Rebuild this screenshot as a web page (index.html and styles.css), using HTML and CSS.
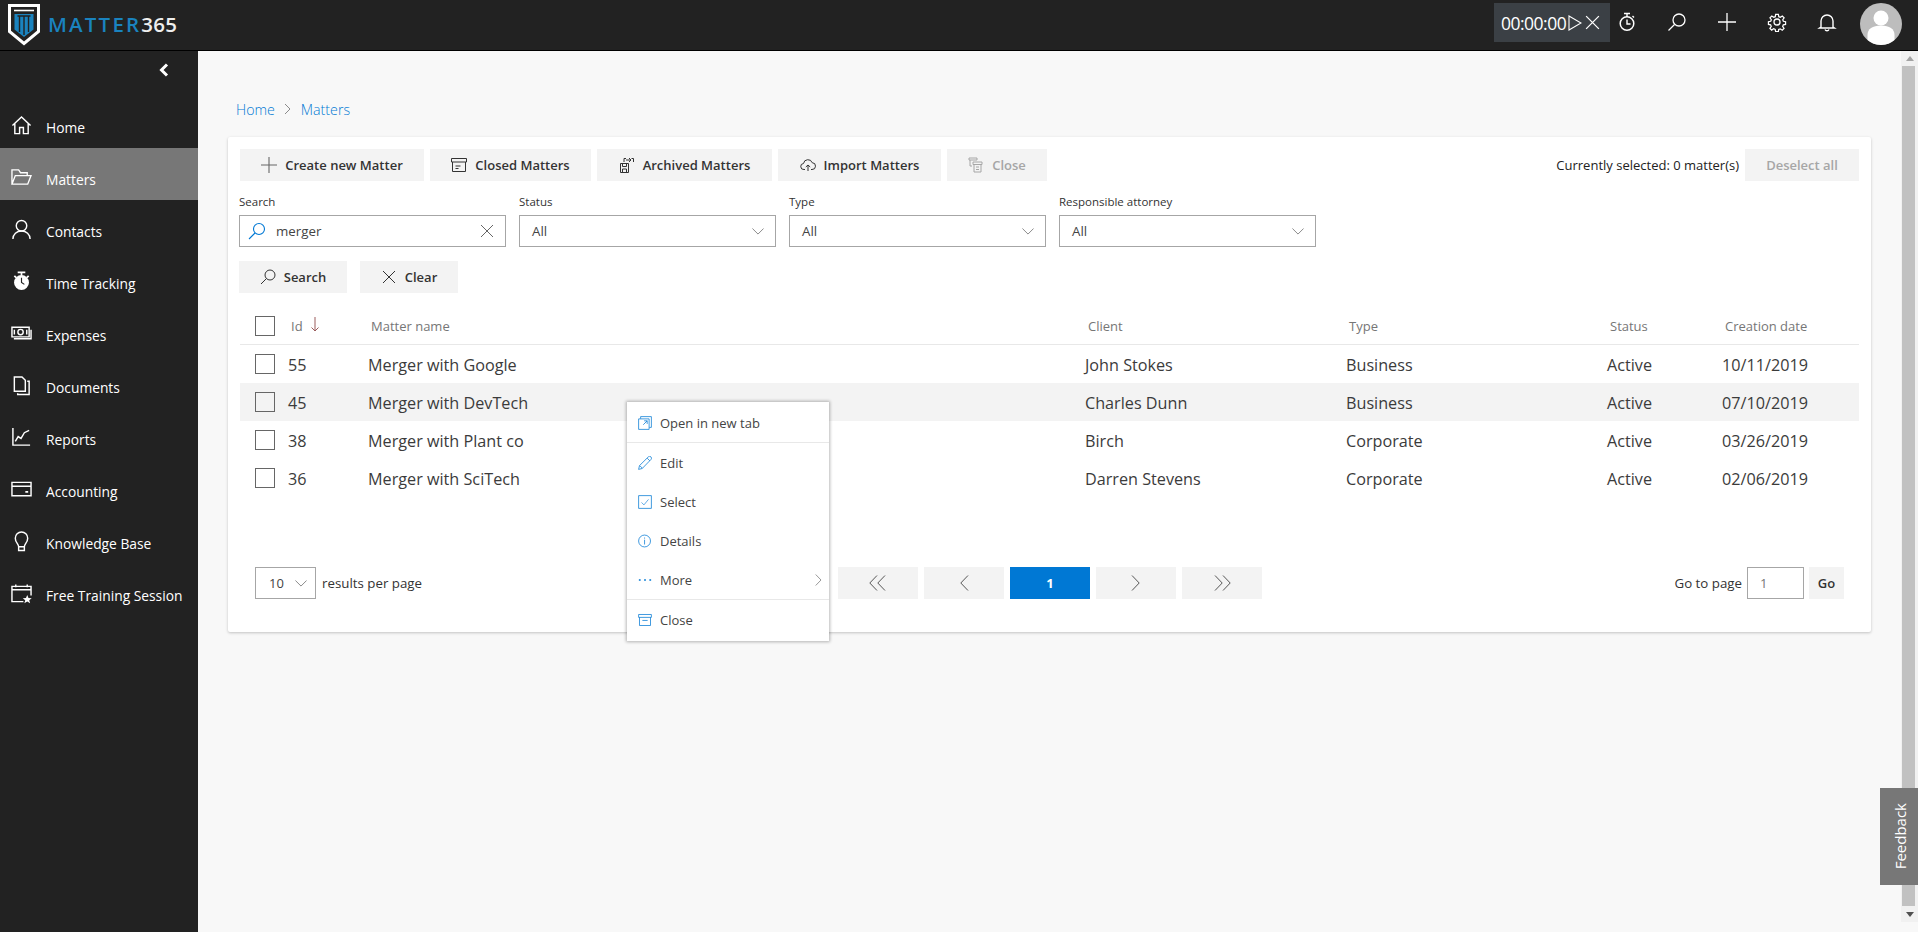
FILE: index.html
```html
<!DOCTYPE html>
<html lang="en">
<head>
<meta charset="utf-8">
<title>Matters - Matter365</title>
<link rel="stylesheet" href="styles.css">
</head>
<body>
<header class="topbar">
  <div class="logo">
    <svg class="logo-mark" width="32" height="42" viewBox="0 0 32 42"><path d="M1.500 1.500h29v26L16 39.500 1.500 27.500z" fill="#222" stroke="#fff" stroke-width="3"/><path d="M6 6.500h20" stroke="#fff" stroke-width="1.600"/><path d="M6.500 10h19v15.500L16 33l-9.500-7.500z" fill="#1a83bf"/><path d="M9.500 12h13M11.500 12v16M16 12v19M20.500 12v16" stroke="#222" stroke-width="1.400" fill="none"/></svg>
    <span class="logo-text"><span class="logo-blue">MATTER</span>365</span>
  </div>
  <div class="top-actions">
    <div class="timer">
      <span class="timer-time">00:00:00</span>
      <svg width="14" height="18" viewBox="0 0 14 18"><path d="M1 2l12 7-12 7z" fill="none" stroke="#fff" stroke-width="1.100"/></svg>
      <svg width="17" height="17" viewBox="0 0 16 16"><path d="M2 2l12 12M14 2L2 14" stroke="#fff" stroke-width="1.200"/></svg>
    </div>
    <svg class="top-icon" width="20" height="20" viewBox="0 0 20 20"><circle cx="10" cy="11.500" r="6.800" fill="none" stroke="#fff" stroke-width="1.500"/><path d="M10 7.500v4.500h3.500M7 1.500h6M10 2v3M15.500 4l1.500 1.500" fill="none" stroke="#fff" stroke-width="1.400"/></svg>
    <svg class="top-icon" width="20" height="20" viewBox="0 0 20 20"><circle cx="12" cy="8" r="6" fill="none" stroke="#fff" stroke-width="1.300"/><path d="M7.500 12.500L1.500 18.500" stroke="#fff" stroke-width="1.300"/></svg>
    <svg class="top-icon" width="20" height="20" viewBox="0 0 20 20"><path d="M10 1v18M1 10h18" stroke="#fff" stroke-width="1.300"/></svg>
    <svg class="top-icon" width="20" height="20" viewBox="0 0 20 20"><circle cx="10" cy="10" r="3" fill="none" stroke="#fff" stroke-width="1.300"/><path d="M8.500 1.500h3l.5 2.600 1.700.7 2.200-1.500 2 2-1.500 2.200.7 1.700 2.400.5v3l-2.500.5-.7 1.700 1.500 2.200-2 2-2.200-1.500-1.700.7-.4 2.400h-3l-.5-2.500-1.700-.7-2.200 1.500-2-2 1.500-2.200-.7-1.700-2.400-.4v-3l2.500-.5.700-1.700-1.500-2.200 2-2 2.200 1.500 1.700-.7z" transform="translate(1 1) scale(.9)" fill="none" stroke="#fff" stroke-width="1.400"/></svg>
    <svg class="top-icon" width="20" height="20" viewBox="0 0 20 20"><path d="M4 15V9a6 6 0 0 1 12 0v6l1.500 1h-15zM8 17.500a2.200 2.200 0 0 0 4 0" fill="none" stroke="#fff" stroke-width="1.400"/></svg>
    <div class="avatar">
      <svg width="42" height="42" viewBox="0 0 42 42"><circle cx="21" cy="21" r="21" fill="#bdbdbd"/><circle cx="21" cy="15" r="7.500" fill="#fff"/><path d="M7.500 37v-5c0-6 5-9.500 13.500-9.500S34.500 26 34.500 32v5a21 21 0 0 1-27 0z" fill="#fff"/></svg>
    </div>
  </div>
</header>

<div class="shell">
  <nav class="sidebar">
    <div class="collapse">
      <svg width="12" height="14" viewBox="0 0 12 14"><path d="M9 1.500L3.500 7 9 12.500" fill="none" stroke="#fff" stroke-width="3"/></svg>
    </div>
    <a class="nav-item"><svg class="nav-icon" viewBox="0 0 22 22"><path d="M1.500 11L11 2l9.500 9M4 9v10.500h5V13h4v6.500h5V9" fill="none" stroke="#fff" stroke-width="1.500"/></svg>Home</a>
    <a class="nav-item active"><svg class="nav-icon" viewBox="0 0 22 22"><path d="M1 18V3h7l2 3h7v3M1 18l3.500-9H21l-3.500 9z" fill="none" stroke="#fff" stroke-width="1.400"/></svg>Matters</a>
    <a class="nav-item"><svg class="nav-icon" viewBox="0 0 22 22"><circle cx="11" cy="7" r="5.500" fill="none" stroke="#fff" stroke-width="1.500"/><path d="M2 21c0-5 4-8.500 9-8.500s9 3.500 9 8.500" fill="none" stroke="#fff" stroke-width="1.500"/></svg>Contacts</a>
    <a class="nav-item"><svg class="nav-icon" viewBox="0 0 22 22"><circle cx="11" cy="12" r="7.800" fill="#fff"/><path d="M7 1.500h8M11 1.500v3M3.500 5l2 2M18.500 5l-2 2" stroke="#fff" stroke-width="1.800"/><path d="M11 7v5l3 2" fill="none" stroke="#222" stroke-width="1.200"/></svg>Time Tracking</a>
    <a class="nav-item"><svg class="nav-icon" viewBox="0 0 22 22"><path d="M1 4.500h18v10H1zM21 7v9.500H3" fill="none" stroke="#fff" stroke-width="1.500"/><circle cx="10" cy="9.500" r="2.800" fill="none" stroke="#fff" stroke-width="1.500"/><path d="M3.500 7v5M16.500 7v5" stroke="#fff" stroke-width="1.500"/></svg>Expenses</a>
    <a class="nav-item"><svg class="nav-icon" viewBox="0 0 22 22"><path d="M3.500 2h8l3.500 3.500V17h-11.500zM17 6.500h2v14H7V19" fill="none" stroke="#fff" stroke-width="1.500"/></svg>Documents</a>
    <a class="nav-item"><svg class="nav-icon" viewBox="0 0 22 22"><path d="M2 1v18h18" fill="none" stroke="#fff" stroke-width="1.500"/><path d="M4.500 15l3-5 3 2 3.500-6 5-2.500" fill="none" stroke="#fff" stroke-width="1.500"/></svg>Reports</a>
    <a class="nav-item"><svg class="nav-icon" viewBox="0 0 22 22"><path d="M1 3.500h20v14H1zM1 7.500h20" fill="none" stroke="#fff" stroke-width="1.500"/><path d="M15 13.500h3" stroke="#fff" stroke-width="1.800"/></svg>Accounting</a>
    <a class="nav-item"><svg class="nav-icon" viewBox="0 0 22 22"><path d="M8 16.500c0-3-3.500-4.500-3.500-9a6.500 6.500 0 0 1 13 0c0 4.500-3.500 6-3.500 9zM8 17v3.500h6V17" fill="none" stroke="#fff" stroke-width="1.500"/></svg>Knowledge Base</a>
    <a class="nav-item"><svg class="nav-icon" viewBox="0 0 22 22"><path d="M13 19.500H1v-16h20V13M1 7h20M5 1.500v3M17 1.500v3" fill="none" stroke="#fff" stroke-width="1.500"/><path d="M17 12.500l1.300 3.200 3.400.2-2.600 2.100.9 3.300-3-1.800-3 1.800.9-3.300-2.600-2.100 3.400-.2z" fill="#fff"/></svg>Free Training Session</a>
  </nav>

  <main class="main">
    <div class="crumbs">
      <a class="crumb">Home</a>
      <svg class="crumb-sep" width="8" height="12" viewBox="0 0 8 12"><path d="M1 1l5 5-5 5" fill="none" stroke="#8a8a8a"/></svg>
      <a class="crumb">Matters</a>
    </div>

    <section class="card">
      <div class="toolbar">
        <div class="tool-group">
          <button class="btn">
            <svg class="btn-icon" viewBox="0 0 16 16"><path d="M8 0v16M0 8h16" stroke="#666" stroke-width="1.100"/></svg>Create new Matter
          </button>
          <button class="btn">
            <svg class="btn-icon" viewBox="0 0 16 16"><path d="M.5 1.500h15v3.500H.5zM1.500 5v9.500h13V5M4.500 9h5M4.500 11.500h3" fill="none" stroke="#333" stroke-width="1"/></svg>Closed Matters
          </button>
          <button class="btn">
            <svg class="btn-icon" viewBox="0 0 16 16"><path d="M5 5V1.500h2M12.500 1.500h2V5M7 3h5M10 1l2 2-2 2M1.500 6.500h8v9h-8zM3.500 6.500v3h4v-3M3.500 15.500v-3.500h4v3.500" fill="none" stroke="#333" stroke-width="1"/></svg>Archived Matters
          </button>
          <button class="btn">
            <svg class="btn-icon" viewBox="0 0 16 16"><path d="M5 12.500H4a3 3 0 0 1-.5-6 4.500 4.500 0 0 1 8.700-.8 3.400 3.400 0 0 1-.2 6.800h-1M8 14V8M5.800 10L8 8l2.200 2" fill="none" stroke="#333" stroke-width="1"/></svg>Import Matters
          </button>
          <button class="btn disabled">
            <svg class="btn-icon" viewBox="0 0 16 16"><path d="M1 1h8v2H1zM2 3v6h2M5 5h9v2.500H5zM6 7.500v7.500h7V7.500M8 10h3M8 12.500h3" fill="none" stroke="#a6a6a6" stroke-width="1"/></svg>Close
          </button>
        </div>
        <div class="selection">
          <span class="selection-text">Currently selected: 0 matter(s)</span>
          <button class="btn disabled deselect">Deselect all</button>
        </div>
      </div>

      <div class="filters">
        <div class="field field-search">
          <label class="field-label">Search</label>
          <div class="control">
            <svg class="search-icon" width="18" height="18" viewBox="0 0 18 18"><circle cx="11" cy="7" r="5.500" fill="none" stroke="#0078d4" stroke-width="1.100"/><path d="M7 11l-6 6" stroke="#0078d4" stroke-width="1.100"/></svg>
            <span class="control-value">merger</span>
            <svg class="clear-icon" width="12" height="12" viewBox="0 0 12 12"><path d="M0 0l12 12M12 0L0 12" stroke="#555" stroke-width=".9"/></svg>
          </div>
        </div>
        <div class="field">
          <label class="field-label">Status</label>
          <div class="control select"><span class="control-value">All</span><svg class="chev" width="12" height="7" viewBox="0 0 14 8"><path d="M.5.5L7 7 13.500.5" fill="none" stroke="#777"/></svg></div>
        </div>
        <div class="field">
          <label class="field-label">Type</label>
          <div class="control select"><span class="control-value">All</span><svg class="chev" width="12" height="7" viewBox="0 0 14 8"><path d="M.5.5L7 7 13.500.5" fill="none" stroke="#777"/></svg></div>
        </div>
        <div class="field">
          <label class="field-label">Responsible attorney</label>
          <div class="control select"><span class="control-value">All</span><svg class="chev" width="12" height="7" viewBox="0 0 14 8"><path d="M.5.5L7 7 13.500.5" fill="none" stroke="#777"/></svg></div>
        </div>
      </div>

      <div class="search-actions">
        <button class="btn btn-search"><svg class="btn-icon" viewBox="0 0 16 16"><circle cx="10" cy="6" r="5" fill="none" stroke="#333"/><path d="M6.500 9.500L1 15" stroke="#333"/></svg>Search</button>
        <button class="btn btn-clear"><svg class="btn-icon" viewBox="0 0 16 16"><path d="M2 2l12 12M14 2L2 14" stroke="#333"/></svg>Clear</button>
      </div>

      <div class="table">
        <div class="row head">
          <span class="check"></span>
          <span class="hcell id-head">Id<svg class="sort" width="8" height="15" viewBox="0 0 8 15"><path d="M4 0v14M.5 10.500L4 14l3.500-3.500" fill="none" stroke="#9b5c5c"/></svg></span>
          <span class="hcell">Matter name</span>
          <span class="hcell">Client</span>
          <span class="hcell">Type</span>
          <span class="hcell">Status</span>
          <span class="hcell">Creation date</span>
        </div>
        <div class="row"><span class="check"></span><span class="cell">55</span><span class="cell">Merger with Google</span><span class="cell">John Stokes</span><span class="cell">Business</span><span class="cell">Active</span><span class="cell">10/11/2019</span></div>
        <div class="row hover"><span class="check"></span><span class="cell">45</span><span class="cell">Merger with DevTech</span><span class="cell">Charles Dunn</span><span class="cell">Business</span><span class="cell">Active</span><span class="cell">07/10/2019</span></div>
        <div class="row"><span class="check"></span><span class="cell">38</span><span class="cell">Merger with Plant co</span><span class="cell">Birch</span><span class="cell">Corporate</span><span class="cell">Active</span><span class="cell">03/26/2019</span></div>
        <div class="row"><span class="check"></span><span class="cell">36</span><span class="cell">Merger with SciTech</span><span class="cell">Darren Stevens</span><span class="cell">Corporate</span><span class="cell">Active</span><span class="cell">02/06/2019</span></div>
      </div>

      <div class="pager">
        <div class="per-page">
          <div class="control page-size"><span class="control-value">10</span><svg class="chev" width="12" height="7" viewBox="0 0 14 8"><path d="M.5.5L7 7 13.500.5" fill="none" stroke="#777"/></svg></div>
          <span class="pager-text">results per page</span>
        </div>
        <div class="pages">
          <button class="page-btn"><svg width="18" height="16" viewBox="0 0 18 16"><path d="M8 .5L.8 8 8 15.500M16 .5L8.800 8 16 15.500" fill="none" stroke="#555"/></svg></button>
          <button class="page-btn"><svg width="10" height="16" viewBox="0 0 10 16"><path d="M9 .5L1.800 8 9 15.500" fill="none" stroke="#555"/></svg></button>
          <button class="page-btn current">1</button>
          <button class="page-btn"><svg width="10" height="16" viewBox="0 0 10 16"><path d="M1 .5L8.200 8 1 15.500" fill="none" stroke="#555"/></svg></button>
          <button class="page-btn"><svg width="18" height="16" viewBox="0 0 18 16"><path d="M2 .5L9.200 8 2 15.500M10 .5L17.200 8 10 15.500" fill="none" stroke="#555"/></svg></button>
        </div>
        <div class="goto">
          <span class="pager-text">Go to page</span>
          <div class="control goto-input"><span class="control-value">1</span></div>
          <button class="btn go">Go</button>
        </div>
      </div>
    </section>
  </main>

  <div class="scrollbar">
    <span class="arrow-up"></span>
    <span class="thumb"></span>
    <span class="arrow-down"></span>
  </div>
</div>

<div class="context-menu">
  <div class="menu-item"><svg class="menu-icon" viewBox="0 0 16 16"><path d="M3 3V.7h12.300V13H13M.7 3.300h12v12h-12zM6 10l4.500-4.500M7 5.500h3.500V9" fill="none" stroke="#0078d4" stroke-opacity=".85"/></svg>Open in new tab</div>
  <div class="menu-divider"></div>
  <div class="menu-item"><svg class="menu-icon" viewBox="0 0 16 16"><path d="M.7 15.300l1-4.300L11.800 1a1.800 1.800 0 0 1 3 3L4.800 14.300zM10.500 2.500l3 3M2 11l3 3" fill="none" stroke="#0078d4" stroke-opacity=".85"/></svg>Edit</div>
  <div class="menu-item"><svg class="menu-icon" viewBox="0 0 16 16"><path d="M.7.7h14.600v14.600H.7z" fill="none" stroke="#0078d4" stroke-opacity=".85"/><path d="M4 8.500l2.800 2.800L12 5" fill="none" stroke="#0078d4" stroke-opacity=".7"/></svg>Select</div>
  <div class="menu-item"><svg class="menu-icon" viewBox="0 0 16 16"><circle cx="7.500" cy="8" r="6.800" fill="none" stroke="#0078d4" stroke-opacity=".85"/><path d="M7.500 6.500V12M7.500 4v1.300" stroke="#0078d4" stroke-opacity=".85"/></svg>Details</div>
  <div class="menu-item"><svg class="menu-icon" viewBox="0 0 16 16"><path d="M1 8h2M7 8h2M13 8h2" stroke="#0078d4" stroke-width="1.500"/></svg>More<svg class="menu-arrow" width="7" height="12" viewBox="0 0 7 12"><path d="M.7.500L6 6 .7 11.500" fill="none" stroke="#999"/></svg></div>
  <div class="menu-divider"></div>
  <div class="menu-item"><svg class="menu-icon" viewBox="0 0 16 16"><path d="M.7 1.700h14.600v3.300H.7zM1.700 5v9.300h12.600V5M5 8.500h6" fill="none" stroke="#0078d4" stroke-opacity=".85"/></svg>Close</div>
</div>

<div class="feedback"><span class="feedback-text">Feedback</span></div>
</body>
</html>
```

FILE: styles.css
```css
* { box-sizing: border-box; }
html, body { height: 100%; }
body {
  margin: 0;
  overflow: hidden;
  background: #f8f8f8;
  color: #333;
  font-family: "Open Sans", "Noto Sans", "Liberation Sans", sans-serif;
  font-size: 13px;
}
button { font: inherit; border: 0; }

/* top bar */
.topbar {
  height: 51px;
  display: flex;
  justify-content: space-between;
  background: #222;
  border-bottom: 1px solid #000;
}
.logo { display: flex; align-items: flex-start; padding: 4px 0 0 8px; }
.logo-mark { flex: none; }
.logo-text {
  margin: 4px 0 0 8px;
  color: #eee;
  font-size: 20.500px;
  font-weight: 600;
  line-height: 32px;
  letter-spacing: .2px;
}
.logo-blue { color: #1a83bf; letter-spacing: 2.200px; }
.top-actions { display: flex; align-items: flex-start; padding-right: 16px; }
.timer {
  width: 116px;
  height: 39px;
  margin: 3px 7px 0 0;
  padding-left: 7px;
  display: flex;
  align-items: center;
  gap: 2px;
  background: #3b4045;
  color: #fff;
}
.timer-time { font-size: 17.500px; letter-spacing: -.5px; }
.top-icon { flex: none; margin: 12px 30px 0 0; }
.avatar { width: 42px; height: 42px; margin: 3px 0 0 -7px; }

/* layout */
.shell { display: flex; height: 881px; }
.sidebar { width: 198px; flex: none; background: #222; color: #fff; }
.collapse { height: 45px; display: flex; justify-content: flex-end; padding: 12px 28px 0 0; }
.nav-item {
  height: 52px;
  display: flex;
  align-items: center;
  gap: 14px;
  padding: 10px 0 0 11px;
  color: #fff;
  font-size: 13.800px;
}
.nav-item.active { background: #777; }
.nav-icon { width: 21px; height: 21px; flex: none; margin-top: -4px; }

.main { flex: 1; min-width: 0; padding: 0 30px; }
.crumbs { height: 86px; display: flex; align-items: center; gap: 9px; padding: 30px 0 0 8px; }
.crumb { color: #0078d4; font-size: 14.200px; font-weight: 300; }

.card {
  height: 495px;
  padding: 12px 12px 0;
  background: #fff;
  border-radius: 2px;
  box-shadow: 0 1px 3px rgba(0,0,0,.22);
}
.toolbar { display: flex; justify-content: space-between; }
.tool-group { display: flex; gap: 6px; }
.btn {
  height: 32px;
  padding: 0;
  display: flex;
  align-items: center;
  justify-content: center;
  gap: 8px;
  background: #f3f3f3;
  color: #333;
  font-size: 13px;
  font-weight: 600;
}
.tool-group .btn:nth-child(1) { width: 184px; }
.tool-group .btn:nth-child(2) { width: 161px; }
.tool-group .btn:nth-child(3) { width: 175px; }
.tool-group .btn:nth-child(4) { width: 163px; }
.tool-group .btn:nth-child(5) { width: 100px; }
.btn.disabled { color: #a6a6a6; }
.btn-icon { width: 16px; height: 16px; flex: none; }
.selection { display: flex; align-items: center; gap: 6px; }
.selection-text { font-size: 13px; color: #222; }
.deselect { width: 114px; }

.filters { display: flex; gap: 13px; margin: 11px 0 0 -1px; }
.field { width: 257px; }
.field-search { width: 267px; }
.field-label { display: block; height: 23px; font-size: 11.500px; line-height: 20px; color: #333; }
.control {
  height: 32px;
  display: flex;
  align-items: center;
  border: 1px solid #a6a6a6;
  background: #fff;
}
.control-value { font-size: 13.300px; color: #444; }
.select { justify-content: space-between; padding: 0 11px 0 12px; }
.search-icon { margin: 0 10px 0 8px; flex: none; }
.clear-icon { margin-left: auto; margin-right: 12px; }

.search-actions { display: flex; gap: 13px; margin: 14px 0 0 -1px; }
.btn-search { width: 108px; }
.btn-clear { width: 98px; }

.table { margin-top: 15px; }
.row {
  display: grid;
  grid-template-columns: 48px 80px 717px 261px 261px 115px 137px;
  align-items: center;
  height: 38px;
  font-size: 16.200px;
  color: #3b3b3b;
}
.row.head {
  height: 37px;
  border-bottom: 1px solid #e8e8e8;
  color: #767676;
  font-size: 13px;
}
.row.hover { background: #f3f3f3; }
.cell { padding-top: 2px; }
.check {
  width: 20px;
  height: 20px;
  margin-left: 15px;
  border: 1px solid #666;
  background: #fff;
}
.row.hover .check { background: #f3f3f3; }
.hcell { padding-left: 3px; }
.id-head { display: flex; align-items: center; gap: 8px; }
.sort { margin-top: -4px; }

.pager {
  display: flex;
  align-items: center;
  margin-top: 70px;
  padding: 0 15px;
}
.per-page { display: flex; align-items: center; gap: 6px; width: 583px; flex: none; }
.page-size { width: 61px; padding: 0 8px 0 13px; justify-content: space-between; }
.page-size .control-value { font-size: 13px; }
.pager-text { font-size: 13.300px; color: #333; white-space: nowrap; }
.pages { display: flex; gap: 6px; }
.page-btn {
  width: 80px;
  height: 32px;
  padding: 0;
  display: flex;
  align-items: center;
  justify-content: center;
  background: #f3f3f3;
}
.page-btn.current { background: #0078d4; color: #fff; font-weight: 700; font-size: 13px; }
.goto { display: flex; align-items: center; gap: 5px; margin-left: auto; }
.goto-input { width: 57px; padding-left: 12px; }
.goto-input .control-value { color: #777; font-size: 13px; }
.go { width: 35px; color: #333; }

/* scrollbar */
.scrollbar {
  width: 17px;
  flex: none;
  height: 871px;
  display: flex;
  flex-direction: column;
  align-items: center;
  background: #f1f1f1;
}
.arrow-up {
  margin: 5px 0 5px;
  border: 4px solid transparent;
  border-top: 0;
  border-bottom: 5px solid #a3a3a3;
}
.thumb { flex: 1; width: 13px; margin-right: 2px; background: #c1c1c1; }
.arrow-down {
  margin: 6px 0 5px;
  border: 4px solid transparent;
  border-bottom: 0;
  border-top: 5px solid #505050;
}

/* overlays */
.context-menu {
  position: absolute;
  left: 627px;
  top: 402px;
  width: 202px;
  height: 239px;
  padding-top: 2px;
  background: #fff;
  box-shadow: 0 0 3px 1px rgba(0,0,0,.28);
  font-size: 13px;
  color: #444;
}
.menu-item {
  position: relative;
  height: 39px;
  display: flex;
  align-items: center;
  gap: 8px;
  padding-left: 11px;
}
.menu-item:first-child { height: 38px; }
.menu-divider { height: 1px; background: #e8e8e8; }
.menu-icon { width: 14px; height: 14px; flex: none; }
.menu-arrow { margin-left: auto; margin-right: 7px; }

.feedback {
  position: absolute;
  left: 1880px;
  top: 788px;
  width: 38px;
  height: 97px;
  display: flex;
  align-items: center;
  justify-content: center;
  background: #777;
}
.feedback-text {
  writing-mode: vertical-rl;
  transform: translateX(1px) rotate(180deg);
  color: #fff;
  font-size: 15px;
}
```
